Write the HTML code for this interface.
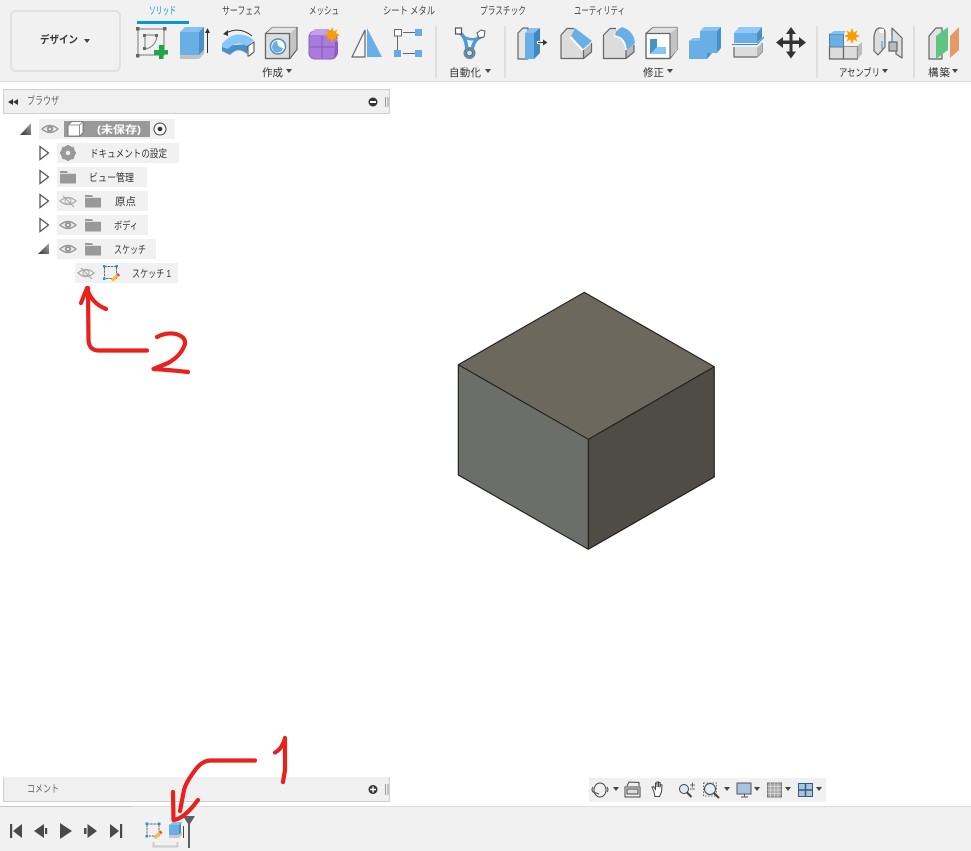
<!DOCTYPE html>
<html lang="ja"><head><meta charset="utf-8"><title>Design</title>
<style>
html,body{margin:0;padding:0;background:#fff;width:971px;height:851px;overflow:hidden}
svg{display:block}
text{font-family:"Liberation Sans","Noto Sans CJK JP",sans-serif;font-size:10.5px;fill:#333}
.tab{font-size:10.5px;fill:#444}
.o{stroke:#666;stroke-width:1.2;stroke-linejoin:round}
.red{fill:none;stroke:#e8211d;stroke-width:4.2;stroke-linecap:round;stroke-linejoin:round}
</style></head><body>
<svg width="971" height="851" viewBox="0 0 971 851" xmlns="http://www.w3.org/2000/svg">
<defs>
<g id="eye"><path d="M-8 0Q0-7 8 0Q0 7-8 0Z" fill="#eee" stroke="#999" stroke-width="1.4"/><circle r="3.2" fill="#999"/><circle r="1.1" fill="#eee"/></g>
<g id="noeye"><path d="M-8 0Q0-7 8 0Q0 7-8 0Z" fill="none" stroke="#aaa" stroke-width="1.2"/><circle r="3" fill="none" stroke="#aaa"/><path d="M-5-5L6 6" stroke="#aaa" stroke-width="1.2"/></g>
<g id="folder"><path d="M0 0h7l1 2h8v10.5H0Z" fill="#999"/><path d="M0 2.5h16" stroke="#eee" stroke-width=".8"/></g>
<polygon id="tc" points="0,-6.5 8.5,0 0,6.5" fill="#fff" stroke="#555" stroke-width="1.3"/>
<linearGradient id="tg" x1="0" x2="1" y1="1" y2="0"><stop offset="0" stop-color="#333"/><stop offset="1" stop-color="#aaa"/></linearGradient>
<polygon id="star" points="0,-8 1.8,-3.4 5.6,-5.6 3.8,-1.8 8,0 3.8,1.8 5.6,5.6 1.8,3.4 0,8 -1.8,3.4 -5.6,5.6 -3.8,1.8 -8,0 -3.8,-1.8 -5.6,-5.6 -1.8,-3.4" fill="#f5a000"/>
<polygon id="dn" points="-3,-2 3,-2 0,2" fill="#444"/>
<g id="sk"><rect x="1.5" y="1.5" width="12" height="12" fill="none" stroke="#666" stroke-width="1" stroke-dasharray="2.4 .8"/><g fill="#1b95e0"><rect width="2.5" height="2.5"/><rect x="12.5" width="2.5" height="2.5"/><rect y="12.5" width="2.5" height="2.5"/></g><path d="M9 15.5L15.5 9.5" stroke="#f0bb40" stroke-width="3.2"/><path d="M14.5 10.5L16 9" stroke="#e5484d" stroke-width="3.2"/></g>
</defs>

<!-- toolbar -->
<rect width="971" height="81" fill="#f1f1f1"/><rect y="81" width="971" height="1" fill="#dcdcdc"/>
<rect x="11" y="11" width="109" height="60" rx="5" fill="#f1f1f1" stroke="#e0e0e0" stroke-width="2"/>
<text x="40" y="43" style="font-weight:bold" textLength="38" lengthAdjust="spacingAndGlyphs">デザイン</text><use href="#dn" x="87" y="41"/>

<text x="149" y="14" class="tab" style="fill:#0696d7" textLength="27" lengthAdjust="spacingAndGlyphs">ソリッド</text>
<text x="222" y="14" class="tab" textLength="39" lengthAdjust="spacingAndGlyphs">サーフェス</text>
<text x="309" y="14" class="tab" textLength="30" lengthAdjust="spacingAndGlyphs">メッシュ</text>
<text x="383" y="14" class="tab" textLength="52" lengthAdjust="spacingAndGlyphs">シート メタル</text>
<text x="480" y="14" class="tab" textLength="46" lengthAdjust="spacingAndGlyphs">プラスチック</text>
<text x="574" y="14" class="tab" textLength="51" lengthAdjust="spacingAndGlyphs">ユーティリティ</text>
<rect x="137" y="21" width="52" height="3" fill="#0696d7"/>

<text x="262" y="76" textLength="21">作成</text><use href="#dn" x="289" y="71"/>
<text x="449" y="76" textLength="32">自動化</text><use href="#dn" x="488" y="71"/>
<text x="643" y="76" textLength="21">修正</text><use href="#dn" x="670" y="71"/>
<text x="839" y="76" textLength="41" lengthAdjust="spacingAndGlyphs">アセンブリ</text><use href="#dn" x="885" y="71"/>
<text x="928" y="76" textLength="22">構築</text><use href="#dn" x="955" y="71"/>
<g fill="#dedede"><rect x="435" y="26" width="2" height="52"/><rect x="504" y="26" width="2" height="52"/><rect x="816" y="26" width="2" height="52"/><rect x="913" y="26" width="2" height="52"/></g>

<!-- sketch -->
<rect x="138" y="29" width="26" height="26" fill="none" stroke="#777" stroke-width="1"/>
<g fill="#666"><rect x="136" y="27" width="3.5" height="3.5"/><rect x="163" y="27" width="3.5" height="3.5"/><rect x="136" y="54" width="3.5" height="3.5"/><rect x="143" y="34" width="3" height="3"/><rect x="155" y="34" width="3" height="3"/><rect x="143" y="47" width="3" height="3"/></g>
<path d="M145 35H156M145 36V48M157 36Q156 46 146 49" fill="none" stroke="#777"/>
<path d="M159 45h4.500v5h4.500v4.500h-4.500v4.500h-4.500v-4.500h-5v-4.500h5Z" fill="#1ea64a"/>
<!-- extrude -->
<path d="M180 55h19l5-5v4l-5 5h-19Z" fill="#c2c2c2"/><path d="M180 32l5-5h19l-5 5Z" fill="#86c1f0"/><path d="M199 32l5-5v23l-5 5Z" fill="#4a8fc6"/><rect x="180" y="32" width="19" height="23" fill="#6aaee6"/>
<path d="M207.500 53V30" stroke="#333" stroke-width="1"/><path d="M205 33l2.500-5 2.500 5Z" fill="#333"/>
<!-- revolve -->
<path d="M252 36Q240 26 226 33" fill="none" stroke="#333" stroke-width="1"/><path d="M223 34l5-4v6Z" fill="#333"/>
<path d="M222 46L248 44L247 54Q238 46 230 55L222 51Z" fill="#4a8fc6"/><path d="M222 44Q236 27 254 40L247 46Q236 40 228 49L222 47Z" fill="#86c6f8"/>
<path d="M248 46l6-4v10l-5 4h-1Z" fill="#fff" stroke="#444"/>
<!-- hole -->
<path class="o" d="M265.500 33.500l7-6h24.500v22l-7 9h-24.500Z" fill="#c4c4c4"/><path d="M266 33.500l6.500-6H296.500l-6.500 6Z" fill="#e4e4e4"/><rect class="o" x="265.500" y="33.500" width="24" height="25" fill="#dedede"/>
<circle cx="278" cy="46.500" r="7.500" fill="#fff" stroke="#4a8fc6" stroke-width="1.500"/><path d="M272.500 45a5.500 5.500 0 0 1 5-4q-1 6 5.500 7a5.500 5.500 0 1 1-10.500-3Z" fill="#6aaee6"/>
<!-- form -->
<rect x="309" y="31" width="28" height="28" rx="6" fill="#a97bdc" stroke="#8a5fc4"/><path d="M315 29h14v6h-20Z" fill="#c4a0ea"/><path d="M322 36V58M310 47h24" stroke="#8358b8" stroke-width="1"/><path d="M335 42h3v12l-4 4Z" fill="#8a5fc4"/><use href="#star" x="332" y="35"/>
<!-- mirror -->
<path d="M352 57L365 30V57Z" fill="#f5f5f5" stroke="#666" stroke-width="1.200"/><path d="M367 28L382 57H367Z" fill="#6aaee6"/>
<!-- pattern -->
<path d="M403 32.500H416M397.500 36V50M403 53.500H416" stroke="#666" stroke-width="1"/>
<rect x="394.500" y="29.500" width="7" height="6.500" fill="#fff" stroke="#666"/><g fill="#64ace4"><rect x="415" y="29" width="7" height="7"/><rect x="394" y="50" width="7" height="7"/><rect x="415" y="50" width="7" height="7"/></g>
<!-- automate -->
<path d="M460 33Q466 37 467 50M483 36Q474 38 472 50" fill="none" stroke="#4f9ad4" stroke-width="3.500"/><path d="M462 36Q472 42 480 37" fill="none" stroke="#4f9ad4" stroke-width="2.500"/>
<rect x="455.500" y="28" width="6" height="6" fill="#fff" stroke="#555" stroke-width="1.200"/><polygon points="477,33 481,30 485,31 484,37 479,38" fill="#fff" stroke="#555"/><circle cx="469.500" cy="53" r="6" fill="#5f8cad"/><circle cx="469.500" cy="53" r="2.800" fill="#ddd" stroke="#555" stroke-width=".6"/>

<!-- press pull -->
<path class="o" d="M518 59V33l5-5h5v31Z" fill="#e4e4e4"/><rect x="525" y="33" width="9" height="26" fill="#6aaee6"/><path d="M525 33l5-5h10l-6 5Z" fill="#86c1f0"/><path d="M534 33l6-5v25l-6 6Z" fill="#3e88c2"/>
<path d="M537 42.500h8" stroke="#fff" stroke-width="3"/><path d="M538 42.500h6" stroke="#333" stroke-width="1.200"/><path d="M543 39.500l4.500 3-4.500 3Z" fill="#333"/>
<!-- chamfer -->
<path d="M561 35l6-7h8l-4 8 12 14v8.500h-22.500Z" fill="#dcdcdc"/><polygon points="583.500,50 591.500,43 591.500,52 583.500,58.500" fill="#bbb"/><path class="o" d="M561 35L567 28.500H574M561 35V58.500H583.500L591.500 52V43M583.500 50V58.500" fill="none"/><polygon points="575,28 592,41 583,49 571,36" fill="#6aaee6"/><polygon points="571,36.500 583,49.500 582,51 569.500,37.500" fill="#fff"/>
<!-- fillet -->
<path d="M604 35l6-7h5l3 4-4 3q8 2 12 15v8.500h-22Z" fill="#dcdcdc"/><polygon points="626,50 634,42 634,52 626,58.500" fill="#bbb"/><path class="o" d="M603.500 35L610 28.500H616M603.500 35V58.500H626L634 52V45M626 50V58.500" fill="none"/><path d="M616 32Q618 29 622 27Q634 31 635 43L627 50Q625 38 615 36Z" fill="#6aaee6"/><path d="M614 36Q625 37 626 50" fill="none" stroke="#fff" stroke-width="1.500"/>
<!-- shell -->
<path class="o" d="M646 33.500l7-6h24v22l-7 9h-24Z" fill="#fff"/><polygon points="670,33.500 677,27.500 677,50 670,58" fill="#c4c4c4"/><polygon points="647,33.500 670,33.500 677,27.500 653,27.500" fill="#dedede"/><rect class="o" x="646" y="33.500" width="24" height="25" fill="none"/><rect x="648" y="36" width="20" height="20" fill="#fff"/><rect x="650" y="39" width="7" height="15" fill="#4a8fc6"/><polygon points="657,47 666,47 666,54 650,54" fill="#86c6f8"/>
<!-- combine -->
<path d="M700 31l4-4h17l-4 4Z" fill="#86c1f0"/><path d="M689 41l4-3h7v3Z" fill="#86c1f0"/><rect x="700" y="31" width="17" height="22" fill="#6aaee6"/><rect x="689" y="41" width="18" height="18" fill="#6aaee6"/><polygon points="717,31 721,27 721,48 717,53" fill="#4a8fc6"/><polygon points="707,53 712,53 707,59" fill="#4a8fc6"/>
<!-- split -->
<polygon points="734,33 739,27 762,27 757,33" fill="#8ec9f8"/><rect x="734" y="33" width="23" height="10" fill="#6aaee6"/><polygon points="757,33 762,27 762,38 757,43" fill="#4a8fc6"/><path d="M732 44.500H757L764 37" fill="none" stroke="#2b8fd6" stroke-width="1"/>
<path d="M734 47H757L762 42V52L757 57H734Z" fill="#dcdcdc"/><path class="o" d="M734 47V57H757L762 52V43" fill="none"/><polygon points="757,48 762,43 762,52 757,57" fill="#bbb"/>
<!-- move -->
<path d="M791 27l5 7h-3.500v6.500H799V37l7 5.500-7 5.500v-4h-6.500v7.500H796l-5 7-5-7h3.500V44H783v4l-7-5.500 7-5.500v3.500h6.500V34H786Z" fill="#333"/>
<!-- assembly -->
<rect class="o" x="829.500" y="46" width="14" height="13" fill="#dcdcdc"/><rect class="o" x="843.500" y="46" width="14" height="13" fill="#dcdcdc"/><polygon points="843.500,46 848,42 862,42 857.500,46" fill="#f3f3f3"/><polygon points="857.500,46 862,42 862,54 857.500,59" fill="#bdbdbd"/>
<rect x="829.500" y="34" width="14" height="13" fill="#6aaee6" stroke="#5b7f9c"/><polygon points="829.500,34 834,31 846,31 843.500,34" fill="#86c1f0"/><use href="#star" x="852" y="36"/>
<!-- joint -->
<path class="o" d="M874 37q1-9 6-9t5 5V47l-7 8-4-4Z" fill="#ddd"/><path d="M879 30q1-2 5-1v4h-4Z" fill="#fff"/><path class="o" d="M892 28l10 10V58l-6-4V46h-4Z" fill="#dedede"/><rect class="o" x="889" y="42" width="8" height="9" fill="#bbb"/><path d="M892 36V42M882 41V49" stroke="#2b8fd6" stroke-width="1"/>
<!-- construct -->
<path class="o" d="M929 36l7-8h6V59h-13Z" fill="#e3e3e3"/><polygon points="936,36 948,27 948,50 936,59" fill="#5fc482"/><polygon points="950,36 959,27 959,50 950,58" fill="#e39a68"/>

<!-- browser header -->
<rect x="3.500" y="89.500" width="386" height="24" fill="#f0f0f0" stroke="#cfcfcf"/>
<path d="M8 102l5-3v6ZM13 102l5-3v6Z" fill="#333"/><text x="27" y="104" style="fill:#666" textLength="32" lengthAdjust="spacingAndGlyphs">ブラウザ</text>
<circle cx="373" cy="102" r="4.500" fill="#333"/><rect x="370" y="101" width="6" height="2" fill="#fff"/><path d="M385.500 97V107M388 97V107" stroke="#999"/>

<!-- tree -->
<g fill="#f1f1f1"><rect x="39" y="119" width="136" height="20"/><rect x="57" y="143" width="122" height="20"/><rect x="57" y="167" width="90" height="20"/><rect x="57" y="191" width="91" height="20"/><rect x="57" y="215" width="91" height="20"/><rect x="57" y="239" width="99" height="20"/><rect x="75" y="263" width="103" height="20"/></g>
<polygon points="20,135 31,123 31,135" fill="url(#tg)"/><polygon points="38,254 49,243 49,254" fill="url(#tg)"/>
<use href="#tc" x="40" y="153"/><use href="#tc" x="40" y="177"/><use href="#tc" x="40" y="201"/><use href="#tc" x="40" y="225"/>
<use href="#eye" x="50" y="129"/>
<rect x="64" y="121" width="86" height="16" fill="#999"/>
<path d="M68 125l4-3.500h11v11l-3 3.500H68Z" fill="#fff" stroke="#666" stroke-width=".8"/><path d="M68 125h11.500l3.500-3.500M79.500 125V136" fill="none" stroke="#777" stroke-width=".8"/>
<text x="97" y="133" style="fill:#fff;font-weight:bold" textLength="44" lengthAdjust="spacingAndGlyphs">(未保存)</text>
<circle cx="160" cy="129" r="6" fill="#f8f8f8" stroke="#444" stroke-width="1"/><circle cx="160" cy="129" r="2.300" fill="#333"/>

<g transform="translate(68,153)"><circle r="5.500" fill="none" stroke="#999" stroke-width="3.500"/><path d="M0-8V8M-8 0H8M-5.700-5.700L5.700 5.700M-5.700 5.700L5.700-5.700" stroke="#999" stroke-width="2.400"/><circle r="2.200" fill="#f1f1f1"/></g>
<text x="90" y="157" textLength="77" lengthAdjust="spacingAndGlyphs">ドキュメントの設定</text>
<use href="#folder" x="60" y="171"/><text x="89" y="181" textLength="45" lengthAdjust="spacingAndGlyphs">ビュー管理</text>
<use href="#noeye" x="68" y="201"/><use href="#folder" x="85" y="195"/><text x="115" y="205" textLength="21">原点</text>
<use href="#eye" x="68" y="225"/><use href="#folder" x="85" y="219"/><text x="114" y="229" textLength="24" lengthAdjust="spacingAndGlyphs">ボディ</text>
<use href="#eye" x="68" y="249"/><use href="#folder" x="85" y="243"/><text x="114" y="253" textLength="32" lengthAdjust="spacingAndGlyphs">スケッチ</text>
<use href="#noeye" x="86" y="273"/><use href="#sk" x="103" y="265"/><text x="132" y="277" textLength="39" lengthAdjust="spacingAndGlyphs">スケッチ 1</text>

<!-- model -->
<polygon points="584.300,292.300 714.300,366.700 588.300,439.300 458.300,364.700" fill="#6c685e"/>
<polygon points="458.300,364.700 588.300,439.300 588.300,549.300 458.300,475" fill="#6b6e69"/>
<polygon points="588.300,439.300 714.300,366.700 714.300,477 588.300,549.300" fill="#4f4c45"/>
<path d="M584.300 292.300L714.300 366.700V477L588.300 549.300L458.300 475V364.700ZM458.300 364.700L588.300 439.300L714.300 366.700M588.300 439.300V549.300" fill="none" stroke="#1c1c1a" stroke-width="1.100" stroke-linejoin="round"/>

<!-- comment -->
<path d="M3.500 777V801.500H389.500V777" fill="#f0f0f0" stroke="#cfcfcf"/>
<text x="27" y="792" style="fill:#666" textLength="32" lengthAdjust="spacingAndGlyphs">コメント</text>
<circle cx="373" cy="789.500" r="4.500" fill="#333"/><path d="M370 789.500h6M373 786.500v6" stroke="#fff" stroke-width="1.400"/><path d="M385.500 784V795M388 784V795" stroke="#999"/>

<!-- nav bar -->
<rect x="589" y="778" width="237" height="24" fill="#f0f0f0"/>
<g fill="none" stroke="#444" stroke-width="1">
<ellipse cx="600" cy="790" rx="6" ry="7"/><path d="M593 787q-2 3 0 5l6 2M607 787q2 3 0 5"/>
<rect x="625" y="787" width="15" height="10"/><rect x="627" y="789" width="11" height="5" fill="#ddd"/><path d="M627 786l2-4 10 .5V786"/>
<path d="M654 792l-2-5 1.500-.5 2 3V783h1.500v4-5h1.500v5-4.500h1.500v5l.5-3 1.500.5-.5 7-2 4.500h-4.500Z" fill="#fff"/>
<circle cx="684" cy="789" r="4.500" fill="#dbe9f5"/>
<path d="M687 792.500l4.500 4.500" stroke-width="2"/><path d="M690 785h5M692.500 782.500v5M690 789h5" stroke-width=".8"/>
<circle cx="710" cy="789" r="5.500" fill="#e4eef7"/><rect x="703.500" y="783" width="13" height="13" stroke-dasharray="1.500 1.500" stroke-width=".8"/>
<path d="M714 793l5 5" stroke-width="2"/>
<rect x="737" y="783" width="14" height="11" fill="#a8c4e2" stroke="#555"/><path d="M741 797h7M744.500 794v3" stroke="#555"/>
<rect x="767.500" y="783" width="14" height="14" fill="#aaa" stroke="#777"/><path d="M770.500 783v14M774.500 783v14M778 783v14M767.500 786.500h14M767.500 790h14M767.500 793.500h14" stroke="#ddd" stroke-width=".7"/>
<rect x="798.500" y="783.500" width="14" height="13" fill="#a8c4e2" stroke="#36597f"/><path d="M805.500 783.500v13M798.500 790h14" stroke="#36597f" stroke-width="1.400"/>
</g>
<use href="#dn" x="616" y="789"/><use href="#dn" x="727" y="789"/><use href="#dn" x="757" y="789"/><use href="#dn" x="788" y="789"/><use href="#dn" x="819" y="789"/>

<!-- timeline -->
<rect y="807" width="971" height="44" fill="#f1f1f1"/><rect y="806" width="971" height="1" fill="#dcdcdc"/><rect y="806" width="133" height="1" fill="#c8c8c8"/>
<g fill="#4a4a4a"><rect x="10" y="824" width="2.200" height="14"/><polygon points="22,824 13,831 22,838"/><polygon points="34,831 44,824 44,838"/><rect x="45" y="828" width="2.200" height="6"/><polygon points="60,823 72,831 60,839"/><rect x="84" y="828" width="2.500" height="6"/><polygon points="87.500,824 97,831 87.500,838"/><polygon points="110,824 119,831 110,838"/><rect x="120" y="824" width="2.200" height="14"/></g>
<use href="#sk" x="145.500" y="822.500"/>
<path d="M169 835h10l3-3v3l-3 3h-10Z" fill="#c8c8c8"/><path d="M169 825l4-3h10l-4 3Z" fill="#86c1f0"/><rect x="169" y="825" width="10" height="10" fill="#6aaee6"/><polygon points="179,825 181,823 181,833 179,835" fill="#4a8fc6"/>
<path d="M183.500 838V826" stroke="#333" stroke-width=".9"/>
<path d="M153.500 842V846.500H177.500V842" fill="none" stroke="#ccc" stroke-width="2"/>
<polygon points="183,816 195,816 190,824 188,824" fill="#606060"/><rect x="188" y="822" width="2" height="26" fill="#606060"/>

<!-- annotations -->
<path class="red" d="M147 350.500H100Q89 351 88.500 340L88 288M81 303L87 288Q91 303 106 309"/>
<path class="red" d="M157 337Q166 332 176 334Q186 337 185 344Q181 356 168 363L153.500 369Q170 370 188 372"/>
<path class="red" d="M255 760.500H210Q202 761 196 769Q186 782 184 790L180 811M173 792L173.500 820Q184 819 198 800"/>
<path class="red" d="M275 752.500Q282 749 285 738L285 770L283 782"/>
</svg>
</body></html>
